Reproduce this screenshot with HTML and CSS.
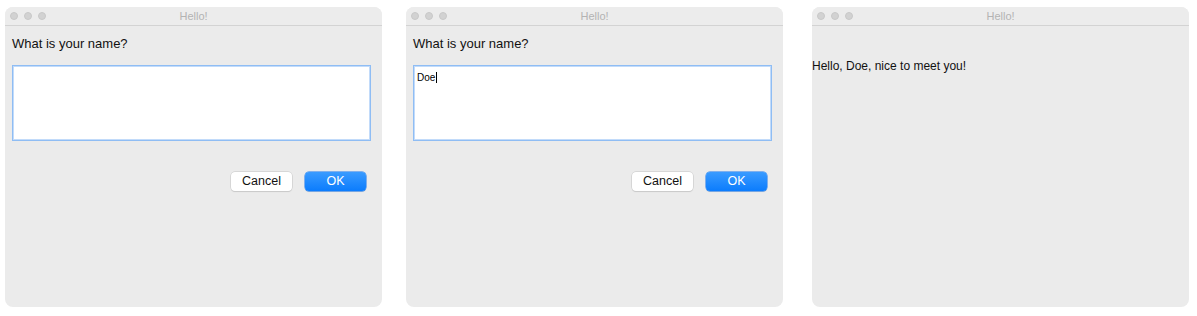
FILE: index.html
```html
<!DOCTYPE html>
<html>
<head>
<meta charset="utf-8" />
<title>Hello dialogs</title>
<link rel="stylesheet" href="styles.css">
</head>
<body>
<div class="strip">
  <div class="win">
    <div class="titlebar">
      <div class="lights"><i></i><i></i><i></i></div>
      <div class="title">Hello!</div>
      <div></div>
    </div>
    <div class="body">
      <div class="prompt">What is your name?</div>
      <div class="field"></div>
      <div class="buttons">
        <div class="btn">Cancel</div>
        <div class="btn btn-ok">OK</div>
      </div>
    </div>
  </div>

  <div class="win">
    <div class="titlebar">
      <div class="lights"><i></i><i></i><i></i></div>
      <div class="title">Hello!</div>
      <div></div>
    </div>
    <div class="body">
      <div class="prompt">What is your name?</div>
      <div class="field"><span class="typed">Doe</span><span class="caret"></span></div>
      <div class="buttons">
        <div class="btn">Cancel</div>
        <div class="btn btn-ok">OK</div>
      </div>
    </div>
  </div>

  <div class="win win-last">
    <div class="titlebar">
      <div class="lights"><i></i><i></i><i></i></div>
      <div class="title">Hello!</div>
      <div></div>
    </div>
    <div class="greeting">Hello, Doe, nice to meet you!</div>
  </div>
</div>
</body>
</html>
```

FILE: styles.css
```css
* {
  padding: 0px;
  margin: 0px;
  box-sizing: border-box;
}
body {
  background: #ffffff;
  font-family: "Liberation Sans", Arial, sans-serif;
  color: #1a1a1a;
}
.strip {
  display: flex;
  padding: 7px 0 0 5px;
}
.win {
  width: 377px;
  height: 300px;
  margin-right: 24px;
  background: #ebebeb;
  border-radius: 8px;
  overflow: hidden;
}
.win-last {
  margin-left: 5px;
  margin-right: 0;
}
.titlebar {
  height: 19px;
  display: grid;
  grid-template-columns: 1fr auto 1fr;
  align-items: center;
  border-bottom: 1px solid #d3d3d3;
  background: #ececec;
}
.lights {
  display: flex;
  gap: 6px;
  padding-left: 5px;
}
.lights i {
  display: block;
  width: 8px;
  height: 8px;
  border-radius: 50%;
  background: #d2d2d2;
  border: 1px solid #c8c8c8;
}
.title {
  font-size: 11px;
  color: #b3b3b3;
}
.body {
  padding: 10px 10px 0 7px;
}
.prompt {
  font-size: 13px;
  line-height: 16px;
  height: 16px;
  color: #111;
}
.field {
  margin-top: 13px;
  width: 359px;
  height: 76px;
  background: #ffffff;
  border: 1px solid #8fbdf4;
  box-shadow: inset 0 0 0 1px #c2dbfa;
  padding: 6px 0 0 3px;
  display: flex;
  align-items: flex-start;
}
.typed {
  font-size: 10px;
  line-height: 12px;
  color: #000;
}
.caret {
  display: block;
  width: 1px;
  height: 11px;
  margin-left: 1px;
  background: #000;
}
.buttons {
  display: flex;
  justify-content: flex-end;
  gap: 13px;
  margin-top: 31px;
  padding-right: 6px;
}
.btn {
  width: 61px;
  height: 19px;
  border-radius: 4px;
  background: #ffffff;
  box-shadow: 0 0 0 0.5px #c4c4c4, 0 1px 1px rgba(0, 0, 0, 0.12);
  font-size: 12.5px;
  line-height: 19px;
  text-align: center;
  color: #111;
}
.btn-ok {
  background: linear-gradient(#3a9bff, #0b7cfd);
  box-shadow: 0 0 0 0.5px #1677f0, 0 1px 1px rgba(0, 0, 0, 0.1);
  color: #ffffff;
}
.greeting {
  margin-top: 33px;
  font-size: 12px;
  line-height: 14px;
  color: #111;
}
```
